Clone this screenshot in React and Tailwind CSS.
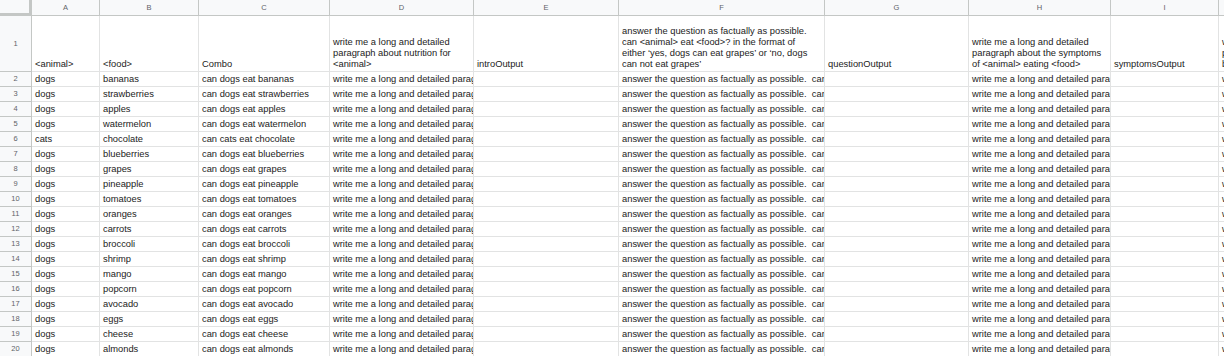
import React from "react";

const rows = [
  ["dogs", "bananas"],
  ["dogs", "strawberries"],
  ["dogs", "apples"],
  ["dogs", "watermelon"],
  ["cats", "chocolate"],
  ["dogs", "blueberries"],
  ["dogs", "grapes"],
  ["dogs", "pineapple"],
  ["dogs", "tomatoes"],
  ["dogs", "oranges"],
  ["dogs", "carrots"],
  ["dogs", "broccoli"],
  ["dogs", "shrimp"],
  ["dogs", "mango"],
  ["dogs", "popcorn"],
  ["dogs", "avocado"],
  ["dogs", "eggs"],
  ["dogs", "cheese"],
  ["dogs", "almonds"],
];

const cols = [
  { l: "A", w: "w-[68px] border-r" },
  { l: "B", w: "w-[99px] border-r" },
  { l: "C", w: "w-[131px] border-r" },
  { l: "D", w: "w-[144px] border-r" },
  { l: "E", w: "w-[145px] border-r" },
  { l: "F", w: "w-[206px] border-r" },
  { l: "G", w: "w-[144px] border-r" },
  { l: "H", w: "w-[142px] border-r" },
  { l: "I", w: "w-[108px] border-r" },
  { l: "J", w: "w-[5px]" },
];

function Cell({ w, children, tall }) {
  return (
    <div
      className={`${w} shrink-0 h-full border-b border-[#e2e3e3] overflow-hidden flex items-end pl-[3px] pb-[1px] text-[9.33px] leading-[11px] text-[#222] ${
        tall ? "" : "whitespace-pre"
      }`}
    >
      <div className={tall ? "whitespace-nowrap" : ""}>{children}</div>
    </div>
  );
}

export default function App() {
  return (
    <div className="w-[1224px] h-[356px] overflow-hidden bg-white font-['Liberation_Sans',Arial,sans-serif]">
      {/* column header row */}
      <div className="flex h-[16px]">
        <div className="w-[32px] shrink-0 h-full bg-[#f8f9fa] border-r-[3px] border-b-[3px] border-[#c4c7c5]" />
        {cols.map((c) => (
          <div
            key={c.l}
            className={`${c.w} shrink-0 h-full bg-[#f8f9fa] border-b border-[#c4c7c5] flex items-center justify-center overflow-hidden text-[7.5px] text-[#5f6368]`}
          >
            {c.l === "J" ? "" : c.l}
          </div>
        ))}
      </div>

      {/* row 1 */}
      <div className="flex h-[56px]">
        <div className="w-[32px] shrink-0 h-full bg-[#f8f9fa] border-r border-b border-[#c4c7c5] flex items-center justify-center text-[7.5px] text-[#5f6368]">
          1
        </div>
        <Cell w={cols[0].w} tall>&lt;animal&gt;</Cell>
        <Cell w={cols[1].w} tall>&lt;food&gt;</Cell>
        <Cell w={cols[2].w} tall>Combo</Cell>
        <Cell w={cols[3].w} tall>
          write me a long and detailed
          <br />
          paragraph about nutrition for
          <br />
          &lt;animal&gt;
        </Cell>
        <Cell w={cols[4].w} tall>introOutput</Cell>
        <Cell w={cols[5].w} tall>
          answer the question as factually as possible.
          <br />
          can &lt;animal&gt; eat &lt;food&gt;? in the format of
          <br />
          either ‘yes, dogs can eat grapes’ or ‘no, dogs
          <br />
          can not eat grapes’
        </Cell>
        <Cell w={cols[6].w} tall>questionOutput</Cell>
        <Cell w={cols[7].w} tall>
          write me a long and detailed
          <br />
          paragraph about the symptoms
          <br />
          of &lt;animal&gt; eating &lt;food&gt;
        </Cell>
        <Cell w={cols[8].w} tall>symptomsOutput</Cell>
        <Cell w={cols[9].w} tall>
          w
          <br />
          p
          <br />
          b
        </Cell>
      </div>

      {rows.map(([animal, food], i) => (
        <div key={i} className="flex h-[15px]">
          <div className="w-[32px] shrink-0 h-full bg-[#f8f9fa] border-r border-b border-[#c4c7c5] flex items-center justify-center text-[7.5px] text-[#5f6368]">
            {i + 2}
          </div>
          <Cell w={cols[0].w}>{animal}</Cell>
          <Cell w={cols[1].w}>{food}</Cell>
          <Cell w={cols[2].w}>{`can ${animal} eat ${food}`}</Cell>
          <Cell w={cols[3].w}>{`write me a long and detailed paragraph about nutrition for ${animal}`}</Cell>
          <Cell w={cols[4].w}>{""}</Cell>
          <Cell w={cols[5].w}>{`answer the question as factually as possible.  can ${animal} eat ${food}? in the format of either`}</Cell>
          <Cell w={cols[6].w}>{""}</Cell>
          <Cell w={cols[7].w}>{`write me a long and detailed paragraph about the symptoms of ${animal} eating ${food}`}</Cell>
          <Cell w={cols[8].w}>{""}</Cell>
          <Cell w={cols[9].w}>{"w"}</Cell>
        </div>
      ))}
    </div>
  );
}
